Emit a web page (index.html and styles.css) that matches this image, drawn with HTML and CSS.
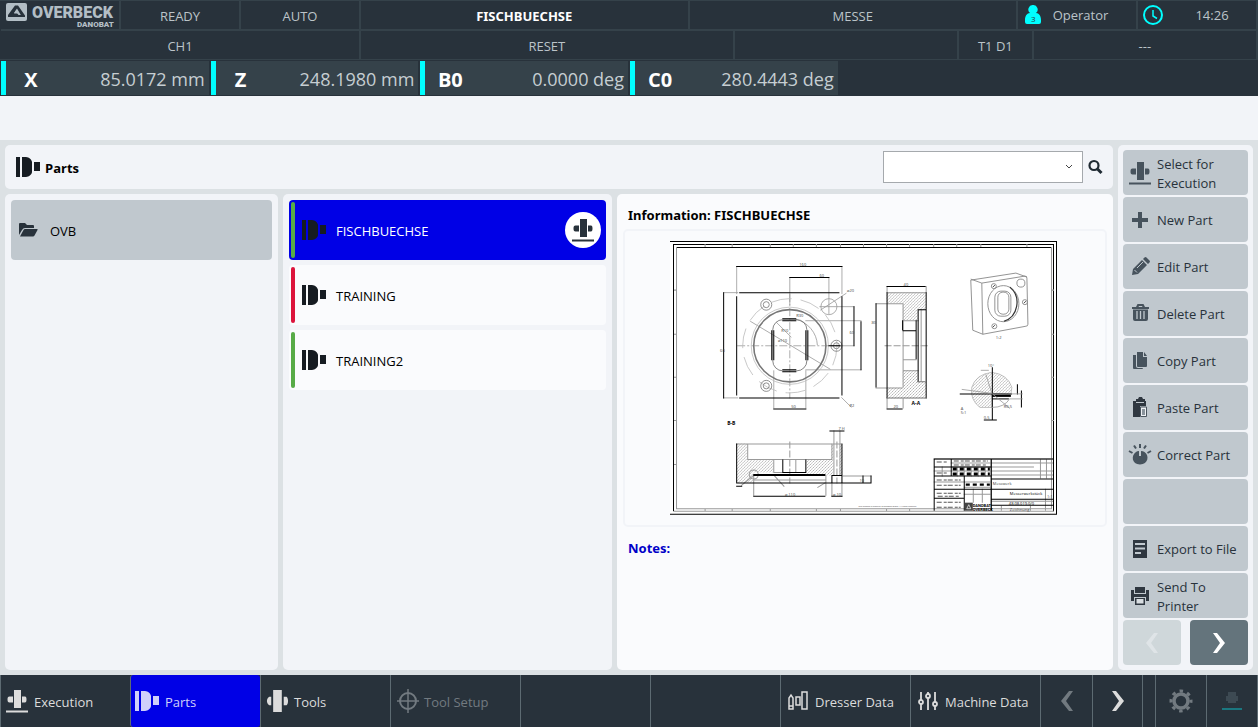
FILE: index.html
```html
<!DOCTYPE html>
<html lang="en">
<head>
<meta charset="utf-8">
<title>Parts</title>
<link rel="stylesheet" href="styles.css">
</head>
<body>
<svg class="defs" aria-hidden="true">
  <symbol id="i-part" viewBox="0 0 25 21"><path d="M0 0h4v20H0zM6 0h4c3 0 6 3 6 5v10c0 2-3 5-6 5H6zM18 5h6v9h-6z"/></symbol>
  <symbol id="i-exec" viewBox="0 0 24 24"><path d="M9 1h7v18H9zM4.500 7.500H8v6H4.500c-1.500 0-2-1-2-3s.5-3 2-3zM17 7.500h3c1 0 1.500 1 1.500 3s-.5 3-1.500 3h-3zM1 21.500h22v2H1z"/></symbol>
  <symbol id="i-tools" viewBox="0 0 24 25"><path d="M8 1h9v23H8zM6 8v9H4c-1.500-1-2.500-2.500-2.500-4.500S2.500 9 4 8zM19 8h3c1 1 1.500 2.500 1.500 4.500S23 16 22 17h-3z"/></symbol>
  <symbol id="i-left" viewBox="0 0 12 20"><path d="M8 0h4L5 10l7 10H8L0 10z"/></symbol>
  <symbol id="i-right" viewBox="0 0 12 20"><path d="M4 0H0l7 10-7 10h4l8-10z"/></symbol>
</svg>

<header class="status">
  <div class="row row-top">
    <div class="cell brand">
      <svg class="logo" viewBox="0 0 112 28" role="img" aria-label="Overbeck Danobat">
        <rect x="2" y="2" width="21" height="18" rx="2" fill="#b3bec5"/>
        <path d="M11 4.500h3l7 10v1.500h-3l-5-8.500-3 4.500 3 0 1.500 2H19v2H4v-2z" fill="#28323b"/>
        <path d="M12.500 8.500l2.500 4h-5z" fill="#b3bec5"/>
        <text class="logo-main" x="28" y="17">OVERBECK</text>
        <text class="logo-sub" x="73" y="26">DANOBAT</text>
      </svg>
    </div>
    <div class="cell">READY</div>
    <div class="cell">AUTO</div>
    <div class="cell strong">FISCHBUECHSE</div>
    <div class="cell">MESSE</div>
    <div class="cell with-icon user">
      <svg class="i20" viewBox="0 0 20 20"><path fill="#00ffff" d="M10 0a4.500 4.500 0 0 1 3 8c3 0 5 3 5 7v2q0 2-2 2H4q-2 0-2-2v-2c0-4 2-7 5-7a4.500 4.500 0 0 1 3-8z"/><text class="badge-num" x="8" y="17">3</text></svg>
      <span>Operator</span>
    </div>
    <div class="cell with-icon clock">
      <svg class="i20 line" viewBox="0 0 20 20" stroke="#00ffff" stroke-width="2"><circle cx="10" cy="10" r="9"/><path d="M10 5v6l4 2.500" stroke-width="1.500"/></svg>
      <span>14:26</span>
    </div>
  </div>
  <div class="row row-mid">
    <div class="cell">CH1</div>
    <div class="cell">RESET</div>
    <div class="cell"></div>
    <div class="cell">T1 D1</div>
    <div class="cell">---</div>
  </div>
  <div class="axes">
    <div class="axis"><b>X</b><span>85.0172 mm</span></div>
    <div class="axis"><b>Z</b><span>248.1980 mm</span></div>
    <div class="axis"><b>B0</b><span>0.0000 deg</span></div>
    <div class="axis"><b>C0</b><span>280.4443 deg</span></div>
  </div>
</header>

<div class="message"></div>

<main class="work">
  <div class="content">
    <section class="titlebar">
      <svg class="part-icon"><use href="#i-part"/></svg>
      <h1>Parts</h1>
      <div class="combo">
        <select aria-label="Filter parts"><option></option></select>
        <svg class="line" viewBox="0 0 8 5" stroke="#444"><path d="M1 1l3 3 3-3"/></svg>
      </div>
      <button class="search" aria-label="Search">
        <svg class="line" viewBox="0 0 16 16" stroke="#1f2a32"><circle cx="6" cy="6.500" r="4.500" stroke-width="2.200"/><path d="M9.500 10l4 4" stroke-width="3"/></svg>
      </button>
    </section>
    <div class="columns">
      <section class="panel">
        <button class="item folder">
          <svg class="folder-icon" viewBox="0 0 19 14"><path d="M1 0h5l2 2h6q1 0 1 1v2H6q-2 0-3 2l-3 5V1q0-1 1-1z"/><path d="M6 6h12q1 0 .5 1l-3 5.500q-.5 1-1.500 1H1l3.500-6.500q.5-1 1.500-1z"/></svg>
          <span>OVB</span>
        </button>
      </section>
      <section class="panel">
        <button class="item selected"><i class="stripe green"></i><svg class="part-icon"><use href="#i-part"/></svg><span>FISCHBUECHSE</span><i class="active-mark"><svg class="i24"><use href="#i-exec"/></svg></i></button>
        <button class="item"><i class="stripe red"></i><svg class="part-icon"><use href="#i-part"/></svg><span>TRAINING</span></button>
        <button class="item"><i class="stripe green"></i><svg class="part-icon"><use href="#i-part"/></svg><span>TRAINING2</span></button>
      </section>
      <section class="panel info">
        <h2>Information: FISCHBUECHSE</h2>
        <div class="preview">
          <svg class="drawing" viewBox="671 241 386 273" role="img" aria-label="Technical drawing">
            <defs>
              <pattern id="hatch" width="3" height="3" patternUnits="userSpaceOnUse"><path d="M0 3L3 0" stroke="#aaa" stroke-width=".7"/></pattern>
            </defs>
            <rect x="671" y="241" width="386" height="273" fill="#fff"/>
            <g fill="none" stroke="#000">
              <path d="M671 241.500h385.500v272H671M674.500 510.500v-266h379v266M677 247.500h374"/>
              <path stroke="#999" d="M675 510.500h379M677.500 247v261h374V247M706 244v3M733 244v3M771 244v3M794 244v3M817 244v3M841 244v3M864 244v3M887 244v3M910 244v3M934 244v3M957 244v3M981 244v3M1027 244v3M706 508v3M733 508v3M771 508v3M817 508v3M841 508v3M887 508v3M910 508v3M675 290h3M675 334h3M675 377h3M675 420h3M675 464h3M1051 290h3M1051 334h3M1051 377h3M1051 420h3"/>
            </g>
            <!-- front view -->
            <g fill="none" stroke="#999" stroke-width=".8">
              <path d="M737.500 266v28M842.500 266v28M790.500 277v28M829.500 277v37M724 292.500h15M724 397.500h15M774.500 370v38M806.500 370v38M820 306.500h35M806 320.500h56M806 369.500h56M832 345.500h23M842 397l10 10M821 310l26-17M751 321l80 48M777 322l15 15"/>
              <path stroke-dasharray="8 2 2 2" d="M738 345.500h105M790.500 294v104"/>
              <circle cx="790.500" cy="345.500" r="47" stroke-dasharray="20 9" stroke="#bbb"/>
              <circle cx="790.500" cy="345.500" r="38.500" stroke="#bbb"/>
              <path d="M796 319a28 28 0 0 1 22 26"/>
              <circle cx="829.500" cy="306.500" r="8"/>
              <g stroke="#777"><circle cx="767" cy="304.500" r="5.500"/><circle cx="767" cy="304.500" r="3"/><circle cx="767" cy="385.500" r="5.500"/><circle cx="767" cy="385.500" r="3"/><circle cx="837" cy="345.500" r="5.500"/><circle cx="837" cy="345.500" r="3"/></g>
              <rect x="773.500" y="319.500" width="34" height="51" rx="10" stroke="#666"/>
              <circle cx="790.500" cy="345.500" r="36" stroke="#777" stroke-width="1.600"/>
            </g>
            <g fill="none" stroke="#000">
              <path d="M737 266.500h106M790 277.500h40M724.500 292v106M854.500 306v40M861.500 321v49M774 408.500h33M740 292.500h100M737.500 296v99M842.500 296v99M740 397.500h100"/>
              <path d="M783 318.500h14M783 320.500h14M783 369.500h14M783 371.500h14M772.500 330v30M774.500 330v30M806.500 330v30M808.500 330v30M829 345.500h12"/>
            </g>
            <!-- section A-A -->
            <path fill="url(#hatch)" stroke="none" d="M887 292h39v18h-8v10h-15v-17h-16zM887 387h16v-17h15v11h8v17h-39z"/>
            <g fill="none" stroke="#999"><path d="M887 303.500h16M887 387.500h16M903.500 303v84M921.500 309v72M876 303.500h11M876 387.500h11M887.500 286v7M926.500 286v7M887 292.500h39M903 320.500h16M903 370.500h16M903 359.500h14M887.500 398v10M903.500 398v10"/><path stroke-dasharray="7 2" d="M885 345.500h44"/></g>
            <g fill="none" stroke="#000"><path d="M887 286.500h39M876.500 303v84M887.500 292v106M926.500 292v106M918.500 309v73M918 309.500h8M903 330.500h14M903 330v-10M916.500 320v39M887 408.500h16"/><path stroke="#777" d="M887 397.500h40M918 381.500h8"/></g>
            <!-- isometric view -->
            <g fill="none" stroke="#888" stroke-width=".9">
              <path d="M982 283l43-7q2 0 2 2l1 46q0 2-2 2l-43 8-10-4-2-50 45-7 11 4M971 279l11 4 1 51"/>
              <ellipse cx="1003.500" cy="303.500" rx="15.500" ry="18"/><path stroke="#333" stroke-width="1.200" d="M1010 287c12 10 8 30-6 34"/>
              <rect x="995" y="291" width="16" height="25" rx="6"/><rect x="998" y="292" width="11" height="22" rx="5"/>
              <circle cx="994" cy="286" r="2.500"/><circle cx="1025" cy="302" r="2.500"/><circle cx="994.500" cy="326" r="2.500"/><circle cx="1021" cy="283" r="4"/>
              <path stroke="#333" d="M993 287l2-2M1024 303l2-2M993 327l2-2"/>
            </g>
            <!-- enlarged detail -->
            <path fill="url(#hatch)" stroke="#aaa" stroke-width=".7" d="M992 393v14h-12q-10-8-8-20 4-13 20-15 16 2 20 15l-1 7z"/>
            <g fill="none" stroke="#000"><path d="M960 393.500h52M992.500 367v52M984 419.500h13M1017.500 384v10M1021.500 390v17"/><path stroke-width="2" d="M992 395.500h19"/><path d="M992 398.500h17"/></g>
            <g fill="none" stroke="#999" stroke-width=".8"><path d="M962 389l30 4M986 374l6 19 18 15M992 407q13 0 18-9M981 370h8M1010 393.500h13M1010 398.500h13"/></g>
            <!-- section B-B -->
            <path fill="url(#hatch)" d="M737 443h11v16h26v13h-20v10h-17zM807 459h25v-16h2v32h-8v-2h-19zM840 443h3v32h-3z"/>
            <g fill="none" stroke="#999"><path d="M737 443.500h105M748.500 443v16h84v-16M774.500 459v13h10M754.500 475v20M826.500 475v20M832.500 482v14M842.500 482v14M754 479.500h72M834.500 430v45M840.500 430v45M843 475.500h29M796.500 459v13M775 475l10 11M742 485l12-10M818 487l8-5"/><circle cx="754.500" cy="474" r="4.500"/><path stroke-dasharray="7 2" d="M790.500 441v42M837.500 441v42"/></g>
            <g fill="none" stroke="#000"><path d="M737.500 443v40M737 482.500h106M842.500 443v40M783.500 459v13h23v-13M754 495.500h72M832 495.500h11M830 430.500h15M832.500 482v-7h10M843 482.500h29M863.500 475v8M871.500 475v8M737 485.500h6"/><path stroke-width="2" d="M754 474.500h72"/></g>
            <!-- title block -->
            <g fill="none" stroke="#999"><path d="M934 458.500h119M951 462.500h40M951 466.500h83M991 462.500h62M991 470.500h62M991 474.500h62M934 470.500h57M991 458v52M1040.500 458v20M1046.500 458v20M934 481.500h57M964 486.500h27M964 493.500h27M973.500 488v14M982.500 488v14M942.500 466v10M957.500 466v10M964.500 466v10M971.500 466v10M978.500 466v10M985.500 466v10M1045.500 488v22M1001.500 505v5M1030.500 505v5M991 500.500h62"/></g>
            <g fill="none" stroke="#000"><path d="M934.500 458v52M951.500 458v18M964.500 476v34M991.500 458v52M934 458.500h119M934 466.500h57M934 475.500h57M991 478.500h62M934 488.500h119M934 497.500h30M991 498.500h62M991 504.500h62"/><path stroke-width="3" stroke-dasharray="4 3" d="M953 468.500h37M953 473.500h37"/><path stroke-width="2" stroke-dasharray="4 3" d="M966 484h24"/><path stroke="#555" stroke-dasharray="5 2 3 1" d="M937 461.500h11M954 460.500h34M937 479.500h24M937 484.500h24M937 492.500h24M938 495.500h22M937 501.500h24M937 506.500h24M954 464.500h32M937 472.500h11"/></g>
            <rect x="965" y="502" width="8" height="8" fill="#444"/><path d="M967 508l2-4 2 4z" stroke="#fff" fill="none" stroke-width=".7"/>
            <g class="drawing-text">
              <text x="800" y="266">160</text><text x="820" y="277">60</text><text x="848" y="292">⌀20</text><text x="721" y="352">60</text><text x="779" y="342">⌀110</text><text x="782" y="332">R10</text><text x="797" y="317">R30</text><text x="792" y="408">50</text><text x="904" y="286">40</text><text x="894" y="408">20</text><text x="912" y="405" class="dark">A-A</text><text x="728" y="425" class="dark">B-B</text><text x="996" y="339">1:2</text><text x="961" y="410">A</text><text x="961" y="414">5:1</text><text x="988" y="367">10°</text><text x="984" y="419">0.5</text><text x="1004" y="408">R0.5</text><text x="786" y="495">⌀ 110</text><text x="834" y="495">⌀ 10</text><text x="839" y="430">7 H</text><text x="850" y="334">60</text><text x="872" y="324">80</text><text x="850" y="407">R2</text><text x="860" y="481">10</text>
              <text class="tiny" x="859" y="506">This drawing is property of Danobat Group. All rights reserved.</text>
              <text x="993" y="484">Messwerk</text>
              <text x="1010" y="494" class="big">Messerwerkstück</text><text x="1009" y="504" class="big">48.08.019.0/0</text><text x="1047" y="497">1:1</text><text x="1010" y="510">Zeichnung</text>
              <text x="973" y="506" class="mark">DANOBAT</text><text x="973" y="510" class="mark">OVERBECK</text>
            </g>
          </svg>
        </div>
        <h2 class="notes">Notes:</h2>
      </section>
    </div>
  </div>

  <aside class="side">
    <button class="cmd"><svg class="i24"><use href="#i-exec"/></svg><span>Select for Execution</span></button>
    <button class="cmd"><svg class="i24" viewBox="0 0 24 24"><path d="M10 4h4v6h6v4h-6v6h-4v-6H4v-4h6z"/></svg><span>New Part</span></button>
    <button class="cmd"><svg class="i24" viewBox="0 0 24 24"><path d="M4 20l1-6L14 5l5 5-9 9zM15 4l1.500-1.500q1-1 2 0l3 3q1 1 0 2L20 9z"/><path class="line" d="M6.500 15l2.500 2.500M9 13l6-6" stroke="#c0c8ce"/></svg><span>Edit Part</span></button>
    <button class="cmd"><svg class="i24" viewBox="0 0 24 24"><path d="M8 5l1-2q0-1 1-1h5q1 0 1 1l1 2h4v2H4V5zm2.500 0h4l-.5-1h-3zM5 7.500h15V17q0 2-2 2H7q-2 0-2-2z"/><path d="M9 9v8M12.500 9v8M16 9v8" stroke="#c0c8ce" stroke-width="1.300"/></svg><span>Delete Part</span></button>
    <button class="cmd"><svg class="i24" viewBox="0 0 24 24"><path d="M9 3h6v5h4v9q0 1-1 1h-8q-1 0-1-1zM16 3l3 4h-3zM5 6h3v11q0 2 2 2h5q0 1-1 1H6q-1 0-1-1z"/></svg><span>Copy Part</span></button>
    <button class="cmd dark"><svg class="i24" viewBox="0 0 24 24"><path d="M5 5h3v2h8V5h2v5h-6v11H5zM8 3h2l1-2h3l1 2h2v3H8z"/><path d="M12.500 11h6v9.500h-6z" fill="#eef1f4" stroke="#4a555e"/><path d="M14 13h3v6h-3z" fill="#8a949c"/></svg><span>Paste Part</span></button>
    <button class="cmd"><svg class="i24" viewBox="0 0 24 24"><path d="M8 9q1-1 3-1v5h2V8q2 0 3.500 1c5 3 4 12.500-4.500 12.500S3 12 8 9z"/><path d="M12 1v4M6 2.500l2 3M18 2.500l-2 3M1 8l3.500 2M23 8l-3.500 2" stroke="#47535d" stroke-width="2"/></svg><span>Correct Part</span></button>
    <button class="cmd" aria-label="Empty"></button>
    <button class="cmd dark"><svg class="i24" viewBox="0 0 24 24"><path d="M5 3h14v18H5z"/><path d="M7 7h10M7 11.500h10M7 16h6" stroke="#c0c8ce" stroke-width="1.800"/></svg><span>Export to File</span></button>
    <button class="cmd dark"><svg class="i24" viewBox="0 0 24 24"><path d="M7 3h10v6H7zM3 6h3v4h12V6h3v11h-3v-4H6v4H3zM7 14h10v7H7z"/><path d="M8.500 15h7v4.500h-7z" fill="#d8dde1"/></svg><span>Send To Printer</span></button>
    <div class="pager">
      <button disabled aria-label="Previous page"><svg class="chev"><use href="#i-left"/></svg></button>
      <button class="next" aria-label="Next page"><svg class="chev"><use href="#i-right"/></svg></button>
    </div>
  </aside>
</main>

<nav class="bottom">
  <button class="tab"><svg class="i24"><use href="#i-exec"/></svg><span>Execution</span></button>
  <button class="tab current"><svg class="part-icon"><use href="#i-part"/></svg><span>Parts</span></button>
  <button class="tab"><svg class="i24"><use href="#i-tools"/></svg><span>Tools</span></button>
  <button class="tab" disabled><svg class="i24 line" viewBox="0 0 24 24" stroke="currentColor" stroke-width="2"><circle cx="13" cy="12" r="8"/><path d="M13 0v24M2 12h22" stroke-width="1.500"/></svg><span>Tool Setup</span></button>
  <button class="tab" aria-label="Empty"></button>
  <button class="tab" aria-label="Empty"></button>
  <button class="tab wide"><svg class="i24 line" viewBox="0 0 24 24" stroke="currentColor" stroke-width="1.500"><path d="M2 20V9l2-3 2 3v11zM2 17h4M9 8h4v8H9zM15 3h5v17h-5z"/></svg><span>Dresser Data</span></button>
  <button class="tab wide"><svg class="i24 line" viewBox="0 0 24 24" stroke="currentColor" stroke-width="1.800"><path d="M4 3v8M4 15v6M11 3v2M11 9v12M18 3v10M18 17v4"/><circle cx="4" cy="13" r="2"/><circle cx="11" cy="7" r="2"/><circle cx="18" cy="15" r="2"/></svg><span>Machine Data</span></button>
  <button class="tab small" disabled aria-label="Previous"><svg class="chev"><use href="#i-left"/></svg></button>
  <button class="tab small edge" aria-label="Next"><svg class="chev"><use href="#i-right"/></svg></button>
  <button class="tab small after" disabled aria-label="Settings"><svg class="i24 line" viewBox="0 0 24 24" stroke="currentColor"><circle cx="12" cy="12" r="7" stroke-width="3.500"/><circle cx="12" cy="12" r="10" stroke-width="3" stroke-dasharray="3.500 4.354" stroke-dashoffset="1.750"/></svg></button>
  <button class="tab small edge" disabled aria-label="Machine"><svg class="i24" viewBox="0 0 24 24"><path d="M8 3h8v11H8zM6 7h2v5H6zM16 7h2v5h-2z" fill="#3d4a53"/><path d="M2 19h20v2H2z" fill="#1b7780"/></svg></button>
</nav>
</body>
</html>
```
FILE: styles.css
```css
* { box-sizing: border-box; }
body {
  margin: 0;
  min-height: 100vh;
  display: flex;
  flex-direction: column;
  background: #dce1e4;
  font-family: "Open Sans", "Noto Sans", sans-serif;
  font-size: 13px;
  line-height: 19px;
  color: #000;
}
button { font: inherit; color: inherit; border: 0; padding: 0; margin: 0; background: none; text-align: left; }
h1, h2 { margin: 0; padding-top: 2px; font-size: 13px; font-weight: 700; }
svg { display: block; flex: none; fill: currentColor; }
.line { fill: none; }
.defs { position: absolute; width: 0; height: 0; }
.i20 { width: 20px; height: 20px; }
.i24 { width: 24px; height: 24px; }
.part-icon { width: 25px; height: 21px; }
.chev { width: 12px; height: 20px; }

/* machine status */
.status { background: #28323b; color: #bcc4c9; }
.row { display: grid; padding-left: 1px; }
.row-top { grid-template-columns: 120px 120px 120px 1fr 1fr 120px 120px; height: 30px; border-top: 1px solid #35424a; }
.row-mid { grid-template-columns: 360px 5fr 3fr 1fr 3fr; height: 30px; border-bottom: 1px solid #35424a; }
.cell { display: flex; align-items: center; justify-content: center; min-width: 0; padding-top: 2px; border-right: 2px solid #35424a; }
.row-top .cell { border-bottom: 1px solid #35424a; }
.row-mid .cell { border-top: 1px solid #35424a; }
.strong { color: #fff; font-family: "Noto Sans", sans-serif; font-weight: 700; }
.row-top .brand { padding-top: 0; }
.with-icon span { flex: 1; padding-top: 1px; text-align: center; }
.row-top .with-icon { padding: 0 0 0 5px; }
.row-top .user { padding-right: 18px; }
.clock svg { margin-right: 5px; }
.logo { width: 112px; height: 28px; }
.logo text { font-family: Roboto, sans-serif; font-weight: 900; fill: #b3bec5; }
.logo .logo-main { font-size: 16px; }
.logo .logo-sub { font-size: 8px; }
.badge-num { font-size: 8px; fill: #28323b; }
.axes { display: grid; grid-template-columns: repeat(6, 1fr); gap: 2px; height: 36px; padding: 1px; }
.axis { display: flex; align-items: center; justify-content: space-between; padding: 2px 4px 0 0; border-left: 5px solid #00ffff; background: #35424a; font-size: 18px; color: #c6ced2; }
.axis b { width: 50px; text-align: center; color: #fff; font-size: 20px; }
.message { height: 44px; background: #f2f4f8; }

/* work area */
.work { flex: 1; display: flex; gap: 5px; padding: 5px; }
.content { flex: 1; display: flex; flex-direction: column; gap: 5px; min-width: 0; }
.titlebar { display: flex; align-items: center; height: 44px; padding: 0 9px 0 11px; border-radius: 5px; background: #f2f4f8; }
.titlebar .part-icon { color: #161c22; margin-right: 4px; }
.combo { position: relative; width: 200px; height: 32px; margin-left: auto; }
.combo select { appearance: none; width: 100%; height: 100%; border: 1px solid #a5a9ad; border-radius: 0; background: #fff; }
.combo svg { position: absolute; right: 10px; top: 13px; width: 8px; height: 5px; }
.search { width: 16px; height: 16px; margin-left: 5px; }
.search svg { width: 16px; height: 16px; }
.columns { flex: 1; display: grid; grid-template-columns: 273fr 329fr 496fr; gap: 5px; }
.panel { display: flex; flex-direction: column; gap: 5px; min-width: 0; padding: 6px; border-radius: 5px; background: #f2f4f8; }
.item { display: flex; align-items: center; height: 60px; padding: 2px; border-radius: 4px; background: #fafbfd; }
.item span, .cmd span, .tab span { padding-top: 2px; }
.item .part-icon { margin: 0 9px 0 7px; color: #161c22; }
.folder { background: #c0c8ce; }
.folder-icon { width: 19px; height: 14px; margin: 0 12px 0 6px; color: #28323b; }
.selected { background: #0000e6; color: #fff; }
.stripe { width: 4px; height: 56px; border-radius: 2px; }
.green { background: #57ab47; }
.red { background: #dc143c; }
.active-mark { display: flex; align-items: center; justify-content: center; width: 36px; height: 36px; margin: 0 3px 0 auto; border-radius: 50%; background: #fff; color: #28323b; }
.info { padding: 10px 6px 6px; background: #fafbfd; gap: 0; }
.info h2 { padding-left: 5px; font-family: "Noto Sans", sans-serif; }
.preview { margin: 4px 0 10px; padding: 10px 48px 10px 45px; border: 2px solid #f2f4f8; border-radius: 5px; }
.drawing { width: 100%; fill: #000; }
.drawing-text { font-size: 4px; fill: #444; }
.drawing-text .tiny { font-size: 2px; }
.drawing-text .dark { font-size: 5px; font-weight: 700; fill: #000; }
.drawing-text .big { font-size: 4px; fill: #000; }
.drawing-text .mark { font-family: Roboto, sans-serif; font-size: 4px; font-weight: 700; fill: #000; }
.notes { color: #0000c8; }

/* commands */
.side { display: flex; flex-direction: column; gap: 2px; width: 135px; padding: 5px; border-radius: 5px; background: #f2f4f8; }
.cmd { display: flex; align-items: center; gap: 5px; height: 45px; padding: 0 5px; border-radius: 4px; background: #c0c8ce; color: #28323b; }
.cmd svg { color: #47535d; }
.dark svg { color: #2f3740; }
.pager { display: grid; grid-template-columns: 1fr 1fr; gap: 9px; height: 45px; }
.pager button { display: flex; align-items: center; justify-content: center; border-radius: 4px; background: #cfd7da; color: #dfe4e7; }
.pager .next { background: #64747c; color: #fff; }

/* navigation */
.bottom { display: grid; grid-template-columns: repeat(8, 130fr) 52fr 51fr 12fr 51fr 52fr; height: 52px; background: #28323b; color: #dcdcdc; }
.tab { display: flex; align-items: center; gap: 5px; min-width: 0; padding-left: 4px; border-left: 1px solid #5d6b72; white-space: nowrap; }
.tab:disabled { color: #727a80; }
.wide { gap: 4px; padding-left: 6px; }
.current { background: #0000e6; border-radius: 3px; color: #d0d0fa; }
.small { justify-content: center; padding: 0; }
.edge { border-right: 1px solid #5d6b72; }
.after { grid-column: 12; }
```
